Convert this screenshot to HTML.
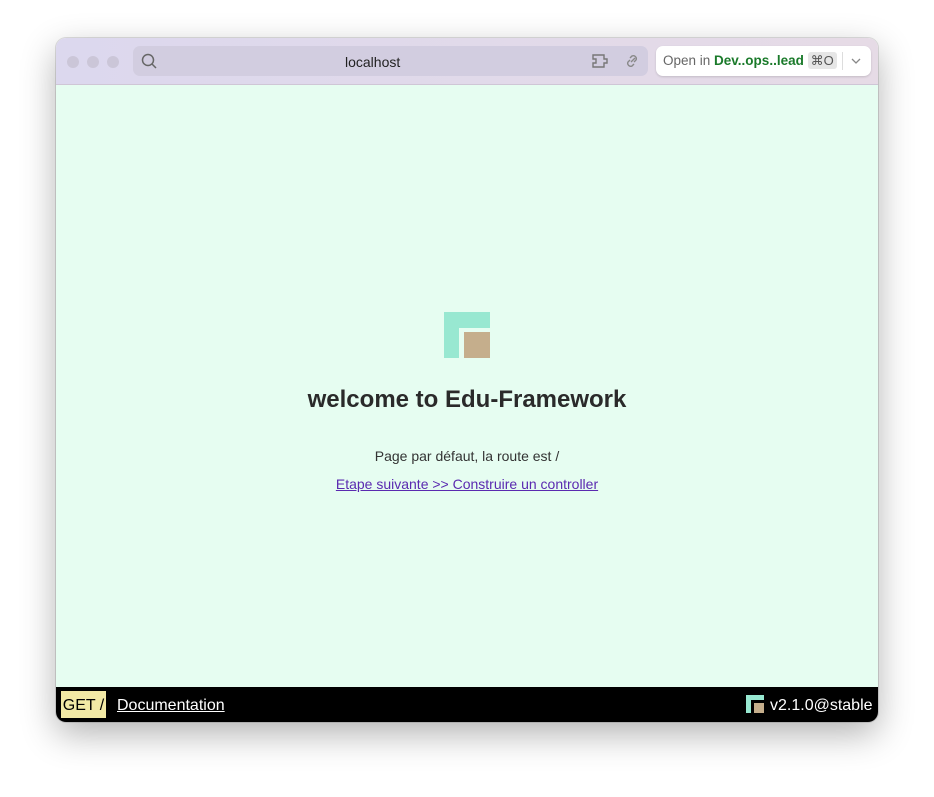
<!DOCTYPE html>
<html><head><style>
body{margin:0;width:934px;height:797px;background:#fff;font-family:"Liberation Sans",sans-serif;position:relative;overflow:hidden}
.win{position:absolute;left:56px;top:38px;width:822px;height:684px;border-radius:10px;overflow:hidden;box-shadow:0 12px 35px rgba(0,0,0,.3),0 0 0 1px rgba(0,0,0,.12)}
.bar{position:absolute;left:0;top:0;width:822px;height:46px;background:linear-gradient(90deg,#dcd8ee,#e6dbe6);border-bottom:1px solid #cfc6d6}
.dot{position:absolute;top:18px;width:12px;height:12px;border-radius:50%;background:#cbc6d8}
.url{position:absolute;left:77px;top:8px;width:515px;height:30px;border-radius:7px;background:#d2cde0;font-size:14px;color:#222;line-height:30px}
.open{position:absolute;left:600px;top:8px;width:215px;height:30px;border-radius:7px;background:#fff;box-shadow:0 1px 2px rgba(0,0,0,.15);font-size:13.5px;line-height:30px;color:#666}
.content{position:absolute;left:0;top:47px;width:822px;height:602px;background:#e6fdf1}
.foot{position:absolute;left:0;top:649px;width:822px;height:35px;background:#000;color:#fff;font-size:16px}
</style></head><body>
<div class="win">
<div class="bar">
<div class="dot" style="left:11px"></div><div class="dot" style="left:31px"></div><div class="dot" style="left:51px"></div>
<div class="url">
<svg style="position:absolute;left:8px;top:7px" width="16" height="16" viewBox="0 0 16 16" fill="none" stroke="#666" stroke-width="1.5"><circle cx="7" cy="7" r="5.5"/><path d="M11 11l4 4"/></svg>
<span style="position:absolute;left:212px;top:1px">localhost</span>
<svg style="position:absolute;left:458px;top:6px" width="20" height="18" viewBox="0 0 20 18" fill="none" stroke="#777" stroke-width="1.4"><path d="M2 3h11v4h3v4h-3v4H2v-4h3V7H2z"/></svg>
<svg style="position:absolute;left:490px;top:6px" width="18" height="18" viewBox="0 0 18 18" fill="none" stroke="#888" stroke-width="1.4"><path d="M8 10l4-4M7 6l2-2a3 3 0 014 4l-2 2M11 12l-2 2a3 3 0 01-4-4l2-2"/></svg>
</div>
<div class="open"><span style="margin-left:7px">Open in </span><b style="color:#1a7a2a;font-weight:bold">Dev..ops..lead</b> <span style="background:#e6e6e6;border-radius:3px;padding:1px 3px;color:#555;font-size:13px">⌘O</span>
<span style="position:absolute;left:186px;top:6px;width:1px;height:18px;background:#ddd"></span>
<svg style="position:absolute;left:194px;top:10px" width="12" height="10" viewBox="0 0 12 10" fill="none" stroke="#888" stroke-width="1.3"><path d="M2 3l4 4 4-4"/></svg></div>
</div>
<div class="content">
<div style="position:absolute;left:388px;top:227px;width:46px;height:46px">
<div style="position:absolute;left:0;top:0;width:46px;height:16px;background:#98e8d1"></div>
<div style="position:absolute;left:0;top:0;width:15px;height:46px;background:#98e8d1"></div>
<div style="position:absolute;left:20px;top:20px;width:26px;height:26px;background:#c5ae8c"></div>
</div>
<div style="position:absolute;left:0;top:301px;width:822px;text-align:center;font-size:24px;font-weight:bold;color:#2a2a2a">welcome to Edu-Framework</div>
<div style="position:absolute;left:0;top:363px;width:822px;text-align:center;font-size:14px;color:#333">Page par défaut, la route est /</div>
<div style="position:absolute;left:0;top:391px;width:822px;text-align:center;font-size:14px;color:#5a2ab0;text-decoration:underline">Etape suivante &gt;&gt; Construire un controller</div>
</div>
<div class="foot">
<span style="position:absolute;left:5px;top:4px;width:45px;height:27px;line-height:29px;background:#f2e9a5;color:#000;text-align:center">GET /</span>
<span style="position:absolute;left:61px;top:10px;text-decoration:underline">Documentation</span>
<div style="position:absolute;left:690px;top:8px;width:18px;height:18px">
<div style="position:absolute;left:0;top:0;width:18px;height:5px;background:#98e8d1"></div>
<div style="position:absolute;left:0;top:0;width:5px;height:18px;background:#98e8d1"></div>
<div style="position:absolute;left:8px;top:8px;width:10px;height:10px;background:#c5ae8c"></div>
</div>
<span style="position:absolute;left:714px;top:10px">v2.1.0@stable</span>
</div>
</div>
</body></html>
